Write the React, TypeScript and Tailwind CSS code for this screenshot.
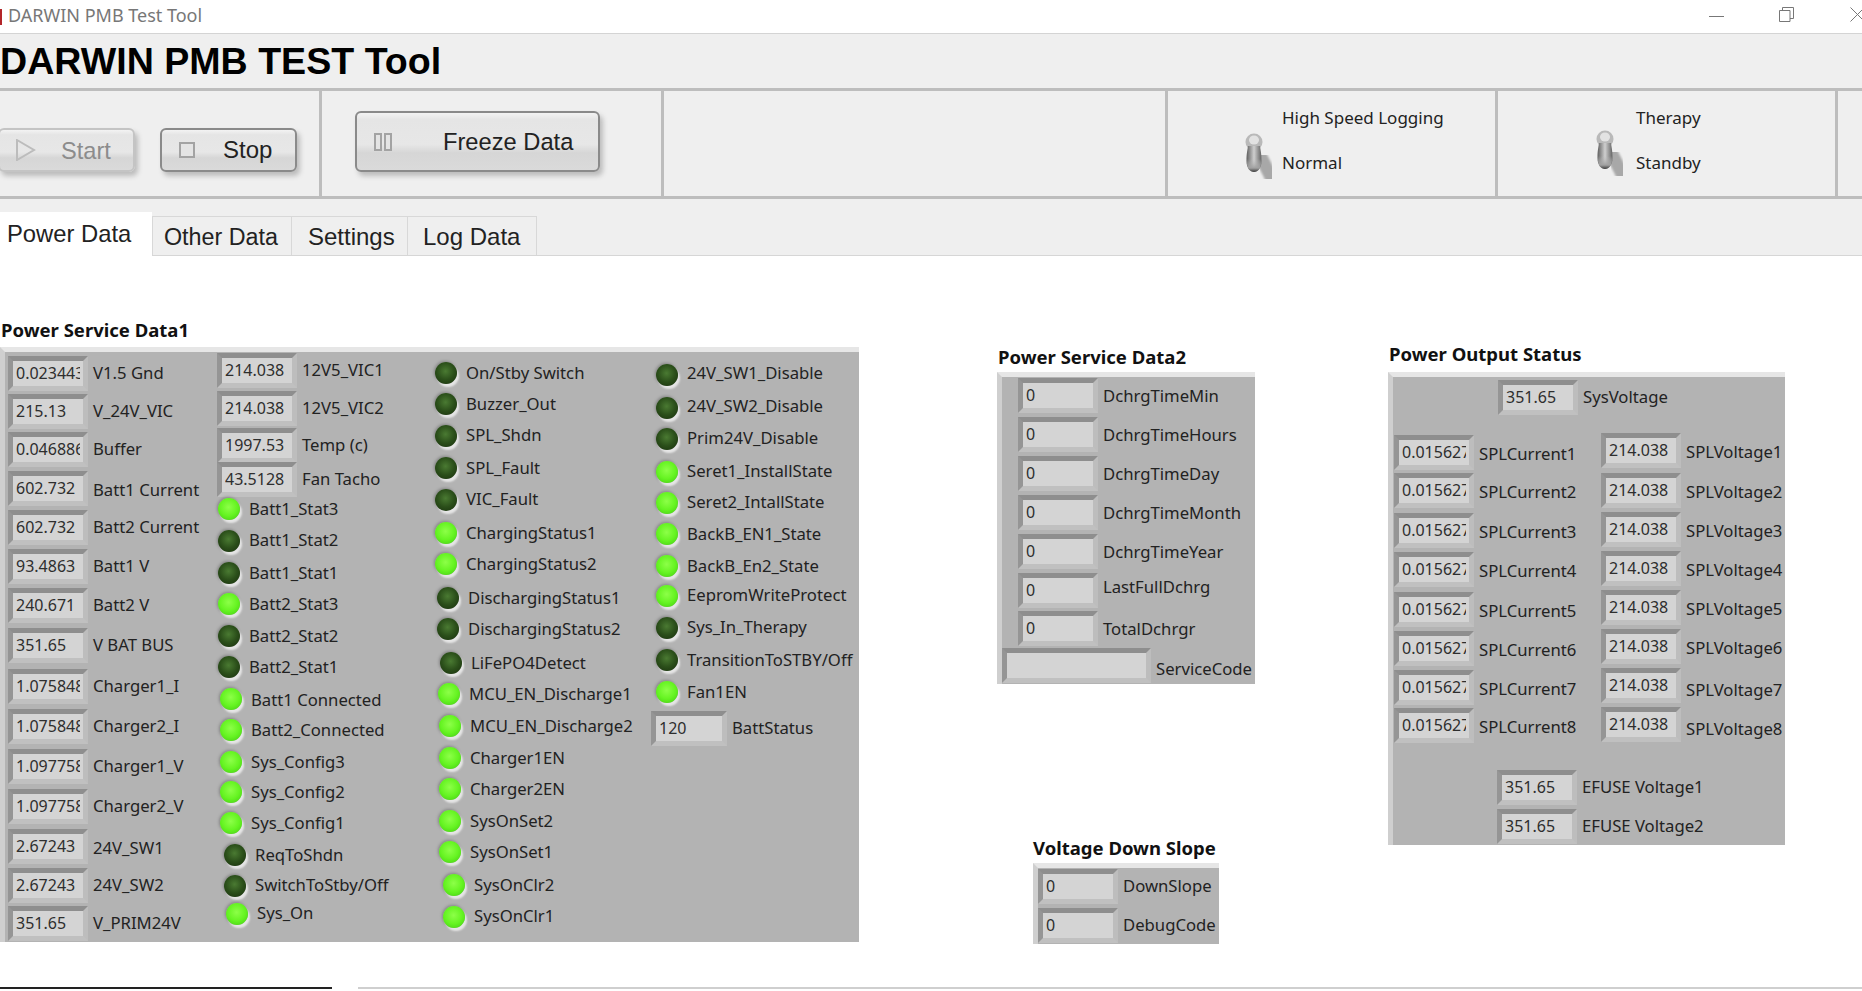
import clsx from "clsx";

type Item = { value?: string; label: string; on?: boolean; cls: string; labelCls?: string };

// Column 1 of Power Service Data1
const SERVICE_NUMS: Item[] = [
  { value: "0.023443", label: "V1.5 Gnd", cls: "mt-[4px]" },
  { value: "215.13", label: "V_24V_VIC", cls: "mt-[3px]" },
  { value: "0.046886", label: "Buffer", cls: "mt-[3px]" },
  { value: "602.732", label: "Batt1 Current", cls: "mt-[4px]", labelCls: "mt-[3px]" },
  { value: "602.732", label: "Batt2 Current", cls: "mt-[4px]" },
  { value: "93.4863", label: "Batt1 V", cls: "mt-[4px]" },
  { value: "240.671", label: "Batt2 V", cls: "mt-[4px]" },
  { value: "351.65", label: "V BAT BUS", cls: "mt-[5px]", labelCls: "mb-[2px]" },
  { value: "1.075848", label: "Charger1_I", cls: "mt-[6px]" },
  { value: "1.075848", label: "Charger2_I", cls: "mt-[5px]" },
  { value: "1.097758", label: "Charger1_V", cls: "mt-[5px]" },
  { value: "1.097758", label: "Charger2_V", cls: "mt-[5px]" },
  { value: "2.67243", label: "24V_SW1", cls: "mt-[5px]", labelCls: "mt-[2px]" },
  { value: "2.67243", label: "24V_SW2", cls: "mt-[4px]" },
  { value: "351.65", label: "V_PRIM24V", cls: "mt-[3px]" },
];

const COL2_NUMS: Item[] = [
  { value: "214.038", label: "12V5_VIC1", cls: "mt-px" },
  { value: "214.038", label: "12V5_VIC2", cls: "mt-[3px]" },
  { value: "1997.53", label: "Temp (c)", cls: "mt-[2px]" },
  { value: "43.5128", label: "Fan Tacho", cls: "-mt-px" },
];

const COL2_LEDS: Item[] = [
  { label: "Batt1_Stat3", on: true, cls: "" },
  { label: "Batt1_Stat2", on: false, cls: "mt-[8px]", labelCls: "mb-[2px]" },
  { label: "Batt1_Stat1", on: false, cls: "mt-[8px]" },
  { label: "Batt2_Stat3", on: true, cls: "mt-[7px]" },
  { label: "Batt2_Stat2", on: false, cls: "mt-[8px]" },
  { label: "Batt2_Stat1", on: false, cls: "mt-[7px]" },
  { label: "Batt1 Connected", on: true, cls: "mt-[8px] ml-[2px]", labelCls: "mt-[2px]" },
  { label: "Batt2_Connected", on: true, cls: "mt-[7px] ml-[2px]" },
  { label: "Sys_Config3", on: true, cls: "mt-[8px] ml-[2px]" },
  { label: "Sys_Config2", on: true, cls: "mt-[6px] ml-[2px]" },
  { label: "Sys_Config1", on: true, cls: "mt-[7px] ml-[2px]" },
  { label: "ReqToShdn", on: false, cls: "mt-[8px] ml-[6px]" },
  { label: "SwitchToStby/Off", on: false, cls: "mt-[7px] ml-[6px]", labelCls: "mb-[3px]" },
  { label: "Sys_On", on: true, cls: "mt-[4px] ml-[8px]", labelCls: "mb-[3px]" },
];

const COL3_LEDS: Item[] = [
  { label: "On/Stby Switch", on: false, cls: "mt-[9px]" },
  { label: "Buzzer_Out", on: false, cls: "mt-[7px]" },
  { label: "SPL_Shdn", on: false, cls: "mt-[8px]", labelCls: "mb-[2px]" },
  { label: "SPL_Fault", on: false, cls: "mt-[8px]" },
  { label: "VIC_Fault", on: false, cls: "mt-[8px]", labelCls: "mb-[3px]" },
  { label: "ChargingStatus1", on: true, cls: "mt-[9px]" },
  { label: "ChargingStatus2", on: true, cls: "mt-[7px]" },
  { label: "DischargingStatus1", on: false, cls: "mt-[10px] ml-[2px]" },
  { label: "DischargingStatus2", on: false, cls: "mt-[7px] ml-[2px]" },
  { label: "LiFePO4Detect", on: false, cls: "mt-[10px] ml-[5px]" },
  { label: "MCU_EN_Discharge1", on: true, cls: "mt-[7px] ml-[3px]" },
  { label: "MCU_EN_Discharge2", on: true, cls: "mt-[8px] ml-[4px]" },
  { label: "Charger1EN", on: true, cls: "mt-[8px] ml-[4px]" },
  { label: "Charger2EN", on: true, cls: "mt-[7px] ml-[4px]" },
  { label: "SysOnSet2", on: true, cls: "mt-[8px] ml-[4px]" },
  { label: "SysOnSet1", on: true, cls: "mt-[7px] ml-[4px]" },
  { label: "SysOnClr2", on: true, cls: "mt-[9px] ml-[8px]" },
  { label: "SysOnClr1", on: true, cls: "mt-[8px] ml-[8px]", labelCls: "mb-[2px]" },
];

const COL4_LEDS: Item[] = [
  { label: "24V_SW1_Disable", on: false, cls: "mt-[11px] ml-[4px]", labelCls: "mb-[4px]" },
  { label: "24V_SW2_Disable", on: false, cls: "mt-[9px] ml-[4px]", labelCls: "mb-[4px]" },
  { label: "Prim24V_Disable", on: false, cls: "mt-[7px] ml-[4px]", labelCls: "mb-[2px]" },
  { label: "Seret1_InstallState", on: true, cls: "mt-[9px] ml-[4px]", labelCls: "mb-[2px]" },
  { label: "Seret2_IntallState", on: true, cls: "mt-[7px] ml-[4px]", labelCls: "mb-[3px]" },
  { label: "BackB_EN1_State", on: true, cls: "mt-[7px] ml-[4px]" },
  { label: "BackB_En2_State", on: true, cls: "mt-[8px] ml-[4px]" },
  { label: "EepromWriteProtect", on: true, cls: "mt-[6px] ml-[4px]", labelCls: "mb-[2px]" },
  { label: "Sys_In_Therapy", on: false, cls: "mt-[8px] ml-[4px]", labelCls: "mb-[2px]" },
  { label: "TransitionToSTBY/Off", on: false, cls: "mt-[8px] ml-[4px]" },
  { label: "Fan1EN", on: true, cls: "mt-[8px] ml-[4px]" },
];

const DATA2: Item[] = [
  { value: "0", label: "DchrgTimeMin", cls: "mt-px", labelCls: "mt-0" },
  { value: "0", label: "DchrgTimeHours", cls: "mt-[4px]", labelCls: "mt-0" },
  { value: "0", label: "DchrgTimeDay", cls: "mt-[4px]", labelCls: "mt-0" },
  { value: "0", label: "DchrgTimeMonth", cls: "mt-[4px]", labelCls: "mt-0" },
  { value: "0", label: "DchrgTimeYear", cls: "mt-[4px]", labelCls: "mt-0" },
  { value: "0", label: "LastFullDchrg", cls: "mt-[4px]", labelCls: "mb-[8px]" },
  { value: "0", label: "TotalDchrgr", cls: "mt-[3px]", labelCls: "mt-0" },
];

const SPL_CURRENT_GAPS = ["mt-[2px]", "mt-[3px]", "mt-[5px]", "mt-[4px]", "mt-[5px]", "mt-[4px]", "mt-[4px]", "mt-[3px]"];
const SPL_VOLTAGE_GAPS = ["", "mt-[5px]", "mt-[4px]", "mt-[4px]", "mt-[4px]", "mt-[4px]", "mt-[4px]", "mt-[4px]"];
const SPL_VOLTAGE_LABELS = ["mt-[3px]", "mt-[3px]", "mt-[3px]", "mt-[2px]", "mt-[2px]", "mt-[2px]", "mt-[8px]", "mt-[9px]"];

function NumRow({
  value,
  label,
  cls,
  labelCls = "mb-[2px]",
  boxWidth = "w-20",
}: {
  value?: string;
  label: string;
  cls?: string;
  labelCls?: string;
  boxWidth?: string;
}) {
  return (
    <div className={clsx("flex h-[35px] items-center", cls)}>
      <div
        className={clsx(
          "h-[35px] shrink-0 border-[5px] border-t-[#8e8e8e] border-r-[#bdbdbd] border-b-[#c0c0c0] border-l-[#959595] bg-[#d4d4d4] px-[3px]",
          boxWidth
        )}
      >
        <div className="overflow-hidden text-[16px] leading-[25px] whitespace-nowrap text-[#2e2e2e]">{value}</div>
      </div>
      <span className={clsx("ml-[5px] text-[16.7px] whitespace-nowrap text-[#222]", labelCls)}>{label}</span>
    </div>
  );
}

function Led({ label, on, cls, labelCls }: { label: string; on?: boolean; cls?: string; labelCls?: string }) {
  return (
    <div className={clsx("flex h-6 items-center", cls)}>
      <div
        className={clsx(
          "ml-px size-[22px] shrink-0 rounded-full shadow-[2px_3px_2px_#e6e6e6,-1px_-1px_3px_#858585]",
          on
            ? "bg-[radial-gradient(circle_at_48%_42%,#8dff48_0%,#66f422_50%,#3fc811_100%)]"
            : "bg-[radial-gradient(circle_at_48%_42%,#4a7a32_0%,#2b4f1a_50%,#182e0c_100%)]"
        )}
      />
      <span className={clsx("ml-[9px] text-[16.7px] whitespace-nowrap text-[#222]", labelCls)}>{label}</span>
    </div>
  );
}

function Panel({ className, children }: { className?: string; children: React.ReactNode }) {
  return (
    <div className={clsx("border-t-[5px] border-l-[5px] border-t-[#e6e6e6] border-l-[#cfcfcf] bg-[#b3b3b3]", className)}>
      {children}
    </div>
  );
}

function PanelTitle({ text, cls }: { text: string; cls: string }) {
  return <div className={clsx("h-6 text-[18.5px] leading-6 font-bold whitespace-nowrap text-[#111]", cls)}>{text}</div>;
}

function Toggle({ cls }: { cls: string }) {
  return (
    <svg width="36" height="56" viewBox="0 0 36 56" className={clsx("shrink-0", cls)}>
      <defs>
        <linearGradient id="toggleBody" x1="0" x2="1" y1="0" y2="0">
          <stop offset="0" stopColor="#5e5e5e" />
          <stop offset="0.5" stopColor="#cfcfcf" />
          <stop offset="1" stopColor="#636363" />
        </linearGradient>
        <linearGradient id="toggleFoot" x1="0" x2="0" y1="0" y2="1">
          <stop offset="0" stopColor="#bdbdbd" stopOpacity="0" />
          <stop offset="0.7" stopColor="#a0a0a0" />
          <stop offset="1" stopColor="#3c3c3c" />
        </linearGradient>
        <filter id="toggleBlur">
          <feGaussianBlur stdDeviation="1.2" />
        </filter>
      </defs>
      <path d="M17 24 L27 44" stroke="#a8a8a8" strokeWidth="13" strokeLinecap="round" filter="url(#toggleBlur)" />
      <ellipse cx="10" cy="9" rx="8.5" ry="8.5" fill="#b9b9b9" />
      <ellipse cx="10" cy="7" rx="5" ry="4.5" fill="#ececec" opacity="0.8" />
      <path
        d="M4 13 H16 C16.5 17 17.5 20 17.5 28 C17.5 35 14 39 10 39 C6 39 2.5 35 2.5 28 C2.5 20 3.5 17 4 13 Z"
        fill="url(#toggleBody)"
      />
      <path
        d="M2.5 26 H17.5 C17.5 35 14 39 10 39 C6 39 2.5 35 2.5 26 Z"
        fill="url(#toggleFoot)"
      />
    </svg>
  );
}

const btnBase =
  "flex items-center rounded-[6px] border-2 bg-[linear-gradient(#f3f3f3_0%,#e5e5e5_12%,#e7e7e7_55%,#d6d6d6_70%,#dadada_100%)] shadow-[3px_4px_5px_#bcbcbc] font-['Liberation_Sans',Arial,sans-serif] text-[24px]";

export default function App() {
  return (
    <div className="flex h-[991px] w-full flex-col overflow-hidden bg-white font-['Noto_Sans',sans-serif]">
      {/* Window title bar */}
      <div className="flex h-[34px] shrink-0 items-center border-b border-[#d4d4d4]">
        <div className="h-4 w-[2px] shrink-0 bg-[#b3262a]" />
        <span className="mb-[2px] ml-[6px] text-[18px] text-[#777]">DARWIN PMB Test Tool</span>
        <div className="mr-[55px] ml-auto h-px w-[15px] bg-[#777]" />
        <svg width="15" height="15" viewBox="0 0 15 15" fill="none" stroke="#777" className="mr-[56px] mb-[4px]">
          <path d="M0.5 3.5h10.5v11h-10.5z M3.5 3.5v-3h11v11h-3.5" />
        </svg>
        <svg width="12" height="15" viewBox="0 0 12 15" fill="none" stroke="#777" className="mb-[4px]">
          <path d="M0.5 0.5 L14.5 14.5 M0.5 14.5 L14.5 0.5" />
        </svg>
      </div>

      {/* LabVIEW header */}
      <div className="shrink-0 bg-[#efefef]">
        <div className="flex h-[54px] items-center pt-[2px] font-['Liberation_Sans',Arial,sans-serif] text-[37.6px] leading-none font-bold text-black">
          DARWIN PMB TEST Tool
        </div>

        {/* Toolbar */}
        <div className="flex h-[111px] border-y-[3px] border-[#bdbdbd]">
          <div className="flex w-[322px] shrink-0 items-start border-r-[3px] border-[#bdbdbd]">
            <div className={clsx(btnBase, "mt-[37px] -ml-[2px] h-[44px] w-[137px] border-[#c4c4c4] text-[#8c8c8c]")}>
              <svg width="20" height="22" viewBox="0 0 20 22" fill="none" stroke="#bcbcbc" strokeWidth="2" className="ml-[16px]">
                <path d="M1 1 L18 11 L1 21 Z" />
              </svg>
              <span className="mt-[3px] ml-[25px] text-[23.6px]">Start</span>
            </div>
            <div className={clsx(btnBase, "mt-[37px] ml-[25px] h-[44px] w-[137px] border-[#8a8a8a] text-[#222]")}>
              <div className="ml-[17px] size-4 border-2 border-[#a3a3a3] bg-[#e4e4e4]" />
              <span className="ml-[28px]">Stop</span>
            </div>
          </div>
          <div className="flex w-[342px] shrink-0 items-start border-r-[3px] border-[#bdbdbd]">
            <div className={clsx(btnBase, "mt-[20px] ml-[33px] h-[61px] w-[245px] border-[#8a8a8a] text-[#222]")}>
              <div className="ml-[17px] h-[18px] w-[8px] border-2 border-[#a3a3a3] bg-[#e4e4e4]" />
              <div className="ml-[2px] h-[18px] w-[8px] border-2 border-[#a3a3a3] bg-[#e4e4e4]" />
              <span className="mt-[2px] ml-[51px] text-[23.7px]">Freeze Data</span>
            </div>
          </div>
          <div className="w-[504px] shrink-0 border-r-[3px] border-[#bdbdbd]" />
          <div className="flex w-[330px] shrink-0 items-start border-r-[3px] border-[#bdbdbd]">
            <Toggle cls="mt-[42px] ml-[76px]" />
            <div className="mt-[15px] ml-[2px] flex flex-col gap-[21px] text-[17px] leading-6 text-[#222]">
              <span>High Speed Logging</span>
              <span>Normal</span>
            </div>
          </div>
          <div className="flex w-[340px] shrink-0 items-start border-r-[3px] border-[#bdbdbd]">
            <Toggle cls="mt-[39px] ml-[97px]" />
            <div className="mt-[15px] ml-[5px] flex flex-col gap-[21px] text-[17px] leading-6 text-[#222]">
              <span>Therapy</span>
              <span>Standby</span>
            </div>
          </div>
        </div>

        {/* Tabs */}
        <div className="flex h-[57px] items-end border-b border-[#d6d6d6] font-['Liberation_Sans',Arial,sans-serif] text-[24px] text-[#222]">
          <div className="-mb-px h-11 w-[152px] shrink-0 bg-white pl-[7px] text-[23.8px] leading-[44px]">Power Data</div>
          <div className="h-[39px] w-[140px] shrink-0 border-x border-t border-[#d8d8d8] pl-[11px] text-[23.3px] leading-[40px]">Other Data</div>
          <div className="h-[39px] w-[116px] shrink-0 border-t border-r border-[#d8d8d8] pl-[16px] leading-[40px]">Settings</div>
          <div className="h-[39px] w-[129px] shrink-0 border-t border-r border-[#d8d8d8] pl-[15px] leading-[40px]">Log Data</div>
        </div>
      </div>

      {/* Front panel */}
      <div className="flex min-h-0 flex-1 items-start">
        <div className="mt-[62px] w-[859px] shrink-0">
          <PanelTitle text="Power Service Data1" cls="mb-[5px] ml-px" />
          <Panel className="flex h-[595px]">
            <div className="ml-[3px] w-[209px] shrink-0">
              {SERVICE_NUMS.map((n) => (
                <NumRow key={n.label} {...n} />
              ))}
            </div>
            <div className="w-[217px] shrink-0">
              {COL2_NUMS.map((n) => (
                <NumRow key={n.label} {...n} />
              ))}
              {COL2_LEDS.map((n) => (
                <Led key={n.label} {...n} />
              ))}
            </div>
            <div className="w-[217px] shrink-0">
              {COL3_LEDS.map((n) => (
                <Led key={n.label} {...n} />
              ))}
            </div>
            <div className="shrink-0">
              {COL4_LEDS.map((n) => (
                <Led key={n.label} {...n} />
              ))}
              <NumRow value="120" label="BattStatus" cls="mt-[7px]" boxWidth="w-[76px]" />
            </div>
          </Panel>
        </div>

        <div className="mt-[89px] ml-[138px] w-[258px] shrink-0">
          <PanelTitle text="Power Service Data2" cls="mb-[3px] ml-px" />
          <Panel className="h-[312px]">
            <div className="ml-[16px]">
              {DATA2.map((n) => (
                <NumRow key={n.label} {...n} />
              ))}
            </div>
            <NumRow label="ServiceCode" cls="mt-[2px]" labelCls="mt-[7px]" boxWidth="w-[149px]" />
          </Panel>
          <PanelTitle text="Voltage Down Slope" cls="mt-[152px] mb-[3px] ml-[36px]" />
          <Panel className="ml-[36px] w-[186px] pb-px">
            <NumRow value="0" label="DownSlope" cls="mt-px" />
            <NumRow value="0" label="DebugCode" cls="mt-[4px]" />
          </Panel>
        </div>

        <div className="mt-[86px] ml-[133px] w-[397px] shrink-0">
          <PanelTitle text="Power Output Status" cls="mb-[6px] ml-px" />
          <Panel className="h-[473px]">
            <NumRow value="351.65" label="SysVoltage" cls="mt-[3px] ml-[105px]" />
            <div className="mt-[18px] flex">
              <div className="ml-px w-[207px] shrink-0">
                {SPL_CURRENT_GAPS.map((gap, i) => (
                  <NumRow key={i} value="0.015627" label={`SPLCurrent${i + 1}`} cls={gap} labelCls="mt-[3px]" />
                ))}
              </div>
              <div className="shrink-0">
                {SPL_VOLTAGE_GAPS.map((gap, i) => (
                  <NumRow key={i} value="214.038" label={`SPLVoltage${i + 1}`} cls={gap} labelCls={SPL_VOLTAGE_LABELS[i]} />
                ))}
              </div>
            </div>
            <NumRow value="351.65" label="EFUSE Voltage1" cls="mt-[27px] ml-[104px]" />
            <NumRow value="351.65" label="EFUSE Voltage2" cls="mt-[4px] ml-[104px]" />
          </Panel>
        </div>
      </div>

      {/* Bottom edge of the next pane */}
      <div className="mb-[2px] flex h-[2px] shrink-0">
        <div className="w-[332px] bg-[#222]" />
        <div className="ml-[26px] flex-1 bg-[#cfcfcf]" />
      </div>
    </div>
  );
}
